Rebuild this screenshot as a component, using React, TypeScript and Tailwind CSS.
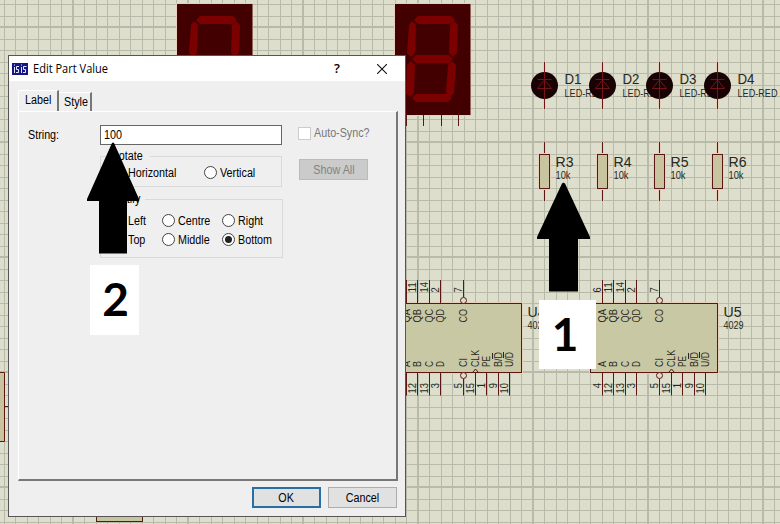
import type { ReactNode } from 'react';

const WIRE = '#5c1712';
const HALO = '#e6cfbd';
const INK = '#282821';
const SANS = '"Liberation Sans", Arial, sans-serif';

function Grid() {
  const xs = Array.from({ length: 68 }, (_, i) => 4 + i * 11.5);
  const ys = Array.from({ length: 46 }, (_, i) => 4 + i * 11.5);
  return (
    <g fill="#b9bbaa">
      {xs.map((x, i) => {
        const bold = i % 10 === 6;
        return <rect key={x} x={bold ? x - 1 : Math.floor(x)} y={0} width={bold ? 2 : 1} height={524} />;
      })}
      {ys.map((y, i) => {
        const bold = i % 10 === 2;
        return <rect key={y} x={0} y={bold ? y - 1 : Math.round(y)} width={780} height={bold ? 2 : 1} />;
      })}
    </g>
  );
}

function SevenSegment({ x }: { x: number }) {
  return (
    <g transform={`translate(${x} 4)`}>
      <rect x={-1} y={-1} width={77} height={113} fill={HALO} />
      <rect width={75.500} height={111} fill="#420000" />
      <g fill="#7b0000">
        <path d="M23 12H56L60 16L56 20H23L19 16Z" />
        <path d="M21 51H54L58 55L54 59H21L17 55Z" />
        <path d="M21 90H53L57 94L53 98H21L17 94Z" />
        <path d="M17 17L21 21L20 49L16 53L12 49L14 21Z" />
        <path d="M59 17L63 21L62 49L58 53L54 49L55 21Z" />
        <path d="M16 57L20 61L19 89L15 93L11 89L12 61Z" />
        <path d="M57 57L61 61L59 89L55 93L51 89L53 61Z" />
      </g>
      <path d="M11.500 111V122M28.500 111V122M46.500 111V122M63.500 111V122" stroke={WIRE} />
    </g>
  );
}

function Label({ x, y, size, w, children }: { x: number; y: number; size: number; w: number; children: string }) {
  return (
    <text x={x} y={y} fontSize={size} textLength={w} lengthAdjust="spacingAndGlyphs" fill={INK}>
      {children}
    </text>
  );
}

function Diode({ x, name }: { x: number; name: string }) {
  return (
    <g>
      <path d={`M${x} 62V109`} stroke={HALO} strokeWidth={3} />
      <circle cx={x} cy={85.500} r={13.500} fill="#180203" />
      <path d={`M${x} 62V109M${x - 7} 79.500H${x + 7}M${x} 80L${x + 7} 88.500H${x - 7}Z`} fill="none" stroke="#741418" />
      <Label x={x + 20} y={84} size={14} w={17}>{name}</Label>
      <Label x={x + 20} y={97} size={10.500} w={40}>LED-RED</Label>
    </g>
  );
}

function Resistor({ x, name }: { x: number; name: string }) {
  return (
    <g>
      <path d={`M${x} 142V201`} stroke={HALO} strokeWidth={3} />
      <path d={`M${x} 142V201`} stroke={WIRE} />
      <rect x={x - 6.500} y={153} width={13} height={37} fill={HALO} />
      <rect x={x - 5} y={154.500} width={10} height={34} fill="#c8c4a0" stroke={WIRE} />
      <Label x={x + 11} y={167} size={14} w={18}>{name}</Label>
      <Label x={x + 11} y={179} size={10.500} w={15}>10k</Label>
    </g>
  );
}

function VText({ x, y, w, anchor = 'start', children }: { x: number; y: number; w: number; anchor?: 'start' | 'end'; children: string }) {
  return (
    <text
      transform={`translate(${x} ${y}) rotate(-90)`}
      fontSize={10.500}
      textLength={w}
      lengthAdjust="spacingAndGlyphs"
      textAnchor={anchor}
      fill={INK}
    >
      {children}
    </text>
  );
}

const TOP_PINS = [
  { dx: 12, name: 'QA', pin: '6' },
  { dx: 23, name: 'QB', pin: '11' },
  { dx: 35, name: 'QC', pin: '14' },
  { dx: 46, name: 'QD', pin: '2' },
  { dx: 69, name: 'CO', pin: '7' },
];
const BOTTOM_PINS = [
  { dx: 12, name: 'A', pin: '4', w: 6 },
  { dx: 23, name: 'B', pin: '12', w: 6 },
  { dx: 35, name: 'C', pin: '13', w: 6 },
  { dx: 46, name: 'D', pin: '3', w: 6 },
  { dx: 69, name: 'CI', pin: '5', w: 9 },
  { dx: 81, name: 'CLK', pin: '15', w: 17 },
  { dx: 92, name: 'PE', pin: '1', w: 11 },
  { dx: 104, name: 'B/D', pin: '9', w: 15 },
  { dx: 115, name: 'U/D', pin: '10', w: 15 },
];

function Chip({ x, name }: { x: number; name: string }) {
  return (
    <g>
      <rect x={x} y={303.500} width={127} height={69} fill="#c8c8a5" stroke={HALO} strokeWidth={3} />
      <rect x={x} y={303.500} width={127} height={69} fill="#c8c8a5" stroke={WIRE} />
      {TOP_PINS.map((p) => (
        <g key={p.name}>
          <path d={`M${x + p.dx} 280V${p.name === 'CO' ? 297 : 303}`} stroke={WIRE} />
          <VText x={x + p.dx + 3} y={322.500} w={13.500}>{p.name}</VText>
          <VText x={x + p.dx - 2} y={292.500} w={p.pin.length * 5.200}>{p.pin}</VText>
        </g>
      ))}
      {BOTTOM_PINS.map((p) => (
        <g key={p.name}>
          <path d={`M${x + p.dx} ${p.name === 'CI' ? 379 : 373}V395.500`} stroke={WIRE} />
          <VText x={x + p.dx + 3} y={367} w={p.w}>{p.name}</VText>
          <VText x={x + p.dx - 2} y={383} w={p.pin.length * 5.200} anchor="end">{p.pin}</VText>
        </g>
      ))}
      <circle cx={x + 69} cy={300.500} r={3} fill="#deddca" stroke={WIRE} />
      <circle cx={x + 69} cy={375.500} r={3} fill="#deddca" stroke={WIRE} />
      <path d={`M${x + 78.500} 372L${x + 81} 369L${x + 83.500} 372`} fill="none" stroke={WIRE} />
      <path d={`M${x + 98} 353V359M${x + 109} 352V358`} stroke={INK} />
      <Label x={x + 133} y={317} size={14} w={18}>{name}</Label>
      <Label x={x + 133} y={329} size={10.500} w={20}>4029</Label>
    </g>
  );
}

function Schematic() {
  return (
    <svg className="absolute inset-0" width={780} height={524} fontFamily={SANS}>
      <rect width={780} height={524} fill="#dedecc" />
      <Grid />
      <SevenSegment x={177} />
      <SevenSegment x={395} />
      {[544.5, 602.5, 659.5, 717.5].map((x, i) => <Resistor key={x} x={x} name={`R${i + 3}`} />)}
      {[544.5, 602.5, 659.5, 717.5].map((x, i) => <Diode key={x} x={x} name={`D${i + 1}`} />)}
      <Chip x={394.500} name="U4" />
      <Chip x={590.500} name="U5" />
      <path d="M-1 372.500H4.500V441.500H-1M5 406.500H10" fill="#c8c4a0" stroke={WIRE} />
      <rect x={96.500} y={500} width={46} height={21.500} fill="#c8c4a0" stroke={WIRE} />
    </svg>
  );
}

const TEXT_FIT = {
  left: 'inline-block origin-left scale-x-[0.86] whitespace-nowrap',
  center: 'inline-block origin-center scale-x-[0.86] whitespace-nowrap',
};

function T({ children, from = 'left' }: { children: ReactNode; from?: 'left' | 'center' }) {
  return <span className={TEXT_FIT[from]}>{children}</span>;
}

function Radio({ label, checked = false }: { label: string; checked?: boolean }) {
  return (
    <label className="flex h-[19px] items-center gap-[3px]">
      <span className="flex size-[13px] shrink-0 items-center justify-center rounded-full border border-[#444] bg-white">
        {checked && <span className="size-[7px] rounded-full bg-[#222]" />}
      </span>
      <span className="pt-px"><T>{label}</T></span>
    </label>
  );
}

function Dialog() {
  return (
    <section className="absolute left-2 top-[55px] flex h-[462px] w-[398px] flex-col border border-[#555] bg-[#efefef] font-['Liberation_Sans',Arial,sans-serif] text-[12.5px] leading-[15px] text-black">
      <header className="flex h-[25px] shrink-0 items-center bg-white pl-[3px] pr-[18px]">
        <svg width="16" height="12" viewBox="0 0 16 12">
          <rect width="16" height="12" fill="#151583" />
          <path d="M2.500 4V10M2.500 1.500V2.500M7 3.500H4.500V6.500H6.500V9.500H4M9.500 4V10M9.500 1.500V2.500M14.500 3.500H11.500V6.500H13.500V9.500H11" fill="none" stroke="#e8e8ff" />
        </svg>
        <h1 className="ml-[5px] flex-1 origin-left scale-x-[0.92] whitespace-nowrap font-['Open_Sans','Noto_Sans',sans-serif] text-[12px]">Edit Part Value</h1>
        <span className="mr-[37px] font-['Open_Sans',sans-serif] text-[13px] font-semibold">?</span>
        <svg width="10" height="10" viewBox="0 0 10 10"><path d="M0 0L10 10M10 0L0 10" stroke="#111" strokeWidth="1.100" /></svg>
      </header>
      <div className="flex h-[30px] shrink-0 items-end pl-[9px]">
        <div className="h-[21px] w-[41px] rounded-tl-[2px] border-l border-t border-r-2 border-l-white border-t-white border-r-[#777] pl-[6px] pt-[2px]"><T>Label</T></div>
        <div className="h-[19px] w-[33px] border-t border-r-2 border-t-white border-r-[#777] pl-[5px] pt-[2px]"><T>Style</T></div>
      </div>
      <main className="ml-[9px] h-[370px] w-[380px] shrink-0 border-b-2 border-l border-r-2 border-t border-b-[#777] border-l-white border-r-[#777] border-t-white">
        <div className="flex pl-[9px] pt-[13px]">
          <div className="w-[72px] shrink-0 pt-[3px]"><T>String:</T></div>
          <div className="w-[182px] shrink-0">
            <div className="h-5 border border-[#666] bg-white pl-[3px] pt-[2px]"><T>100</T></div>
            <fieldset className="mt-[4px] h-[38px] border border-[#d9d9d9] pl-[11px]">
              <legend className="-ml-[1px] h-[15px] bg-[#efefef] pr-[2px]"><T>Rotate</T></legend>
              <div className="-mt-[1px] flex">
                <div className="w-[92px]"><Radio label="Horizontal" /></div>
                <Radio label="Vertical" />
              </div>
            </fieldset>
            <fieldset className="mt-[5px] h-[66px] border border-[#d9d9d9] pl-[11px]">
              <legend className="-ml-[2px] h-[15px] bg-[#efefef]"><T>Justify</T></legend>
              <div className="mt-[4px] grid grid-cols-[50px_60px_60px]">
                <Radio label="Left" />
                <Radio label="Centre" />
                <Radio label="Right" />
                <Radio label="Top" />
                <Radio label="Middle" />
                <Radio label="Bottom" checked />
              </div>
            </fieldset>
          </div>
          <div className="ml-4 w-[76px] pt-[1px]">
            <label className="flex h-[14px] items-center gap-[3px] text-[#777]">
              <span className="size-[13px] shrink-0 border border-[#ccc] bg-white" />
              <T>Auto-Sync?</T>
            </label>
            <button className="mt-[19px] ml-[1px] flex h-[21px] w-[69px] items-center justify-center border border-[#bbb] bg-[#cbcbcb] pt-px text-[#838383]"><T from="center">Show All</T></button>
          </div>
        </div>
      </main>
      <footer className="flex justify-end gap-[7px] pr-[8px] pt-[6px]">
        <button className="flex h-[21px] w-[69px] items-center justify-center border-2 border-[#286fa4] bg-[#e1e1e1] pt-px"><T from="center">OK</T></button>
        <button className="flex h-[21px] w-[69px] items-center justify-center border border-[#adadad] bg-[#e1e1e1] pt-px"><T from="center">Cancel</T></button>
      </footer>
    </section>
  );
}

function Callout({ n, className }: { n: string; className: string }) {
  return (
    <div className={`absolute flex items-center justify-center bg-white font-['Lato',sans-serif] leading-none font-bold text-black ${className}`}>
      {n}
    </div>
  );
}

export default function App() {
  return (
    <div className="relative h-[524px] w-[780px] overflow-hidden">
      <Schematic />
      <Dialog />
      <svg className="absolute inset-0" width={780} height={524}>
        <path d="M112 143Q113 142 114 143L139 199V201H127V253.500H99V201H87V199Z" />
        <path d="M562 183.500Q563.500 182 565 183.500L590 237V239H578V291.500H549V239H537V237Z" />
      </svg>
      <Callout n="2" className="left-[90px] top-[265px] h-[70px] w-[49px] pl-[2px] pb-[3px] text-[46px]" />
      <Callout n="1" className="left-[539px] top-[300px] h-[69px] w-[57px] pr-[5px] pb-[1px] text-[46px]" />
    </div>
  );
}
